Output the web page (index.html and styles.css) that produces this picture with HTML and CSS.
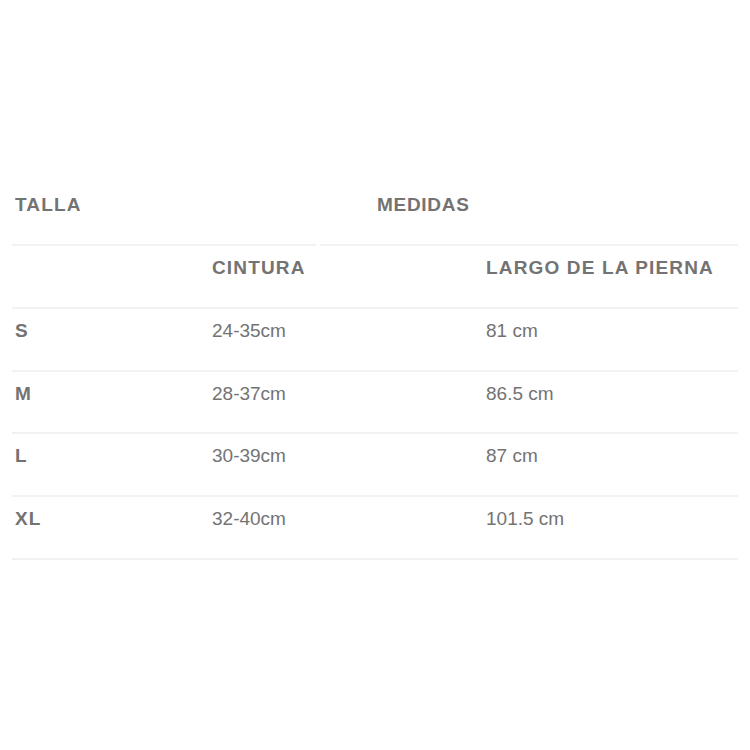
FILE: index.html
```html
<!DOCTYPE html>
<html lang="es">
<head>
<meta charset="utf-8">
<title>Tabla de tallas</title>
<link rel="stylesheet" href="styles.css">
</head>
<body>
<div class="size-table">
  <div class="top-row">
    <div class="top-cell head">TALLA</div>
    <div class="top-cell head medidas">MEDIDAS</div>
  </div>
  <div class="row">
    <div class="cell head"></div>
    <div class="cell head">CINTURA</div>
    <div class="cell head">LARGO DE LA PIERNA</div>
  </div>
  <div class="row">
    <div class="cell head">S</div>
    <div class="cell">24-35cm</div>
    <div class="cell">81 cm</div>
  </div>
  <div class="row">
    <div class="cell head">M</div>
    <div class="cell">28-37cm</div>
    <div class="cell">86.5 cm</div>
  </div>
  <div class="row">
    <div class="cell head">L</div>
    <div class="cell">30-39cm</div>
    <div class="cell">87 cm</div>
  </div>
  <div class="row">
    <div class="cell head">XL</div>
    <div class="cell">32-40cm</div>
    <div class="cell">101.5 cm</div>
  </div>
</div>
</body>
</html>
```
FILE: styles.css
```css
html, body {
  margin: 0;
  padding: 0;
  background: #ffffff;
}

body {
  padding: 183px 12px 0 12px;
  font-family: "Liberation Sans", Arial, sans-serif;
  color: #737373;
}

.size-table {
  width: 726px;
}

.top-row {
  display: grid;
  grid-template-columns: 304px 1fr;
  column-gap: 4px;
}

.top-cell {
  padding: 11px 3px 28px 3px;
  border-bottom: 2px solid #f2f2f2;
  font-size: 19px;
  line-height: 22px;
  height: 22px;
}

.top-cell.medidas {
  padding-left: 57px;
  letter-spacing: 0.7px;
}

.row {
  display: grid;
  grid-template-columns: 197px 274px 1fr;
  border-bottom: 2px solid #f2f2f2;
}

.cell {
  padding: 11px 3px 28px 3px;
  font-size: 19px;
  line-height: 22px;
  height: 22px;
  white-space: nowrap;
}

.cell:last-child {
  padding-bottom: 27px;
}

.row .cell {
  padding-bottom: 27.8px;
}

.head {
  font-weight: bold;
  letter-spacing: 1.15px;
}
```
